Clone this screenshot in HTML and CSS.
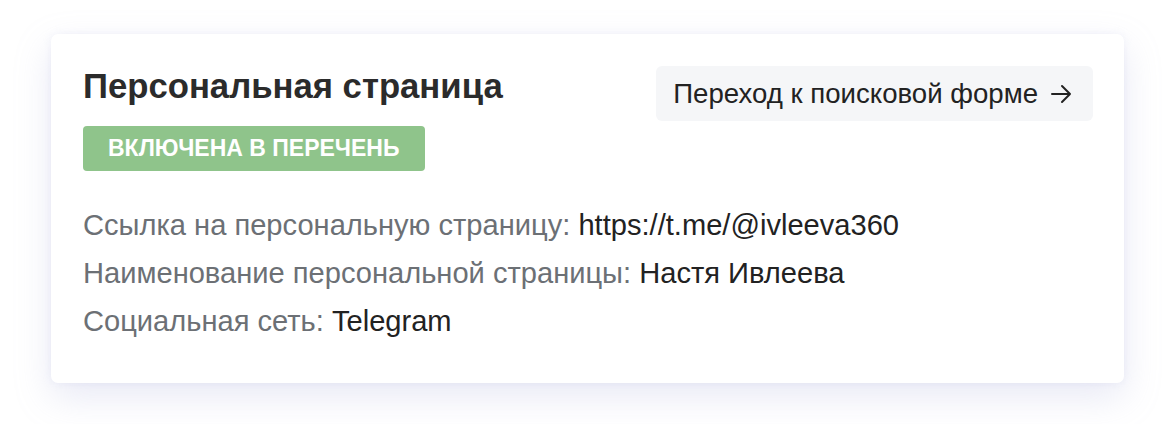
FILE: index.html
```html
<!DOCTYPE html>
<html lang="ru">
<head>
<meta charset="utf-8">
<link rel="stylesheet" href="styles.css">
</head>
<body>
<div class="page">
  <section class="card">
    <div class="head">
      <div class="head-left">
        <h2 class="title">Персональная страница</h2>
        <span class="badge">Включена в перечень</span>
      </div>
      <a class="btn" href="#">Переход к поисковой форме <svg class="arrow" width="22" height="20" viewBox="0 0 22 20" fill="none" stroke="#222" stroke-width="2" stroke-linecap="round" stroke-linejoin="round"><path d="M2 10H20M12 2L20 10L12 18"/></svg></a>
    </div>
    <div class="rows">
      <p class="row"><span class="label">Ссылка на персональную страницу:</span> <span class="value">https://t.me/@ivleeva360</span></p>
      <p class="row"><span class="label">Наименование персональной страницы:</span> <span class="value">Настя Ивлеева</span></p>
      <p class="row"><span class="label">Социальная сеть:</span> <span class="value">Telegram</span></p>
    </div>
  </section>
</div>
</body>
</html>
```

FILE: styles.css
```css
* { box-sizing: border-box; }
html, body { margin: 0; padding: 0; background: #fff; }
body { font-family: "Liberation Sans", Arial, sans-serif; color: #222; }
.page { padding: 34px 52px 41px 51px; }
.card {
  background: #fff;
  border-radius: 7px;
  box-shadow: 0 14px 36px rgba(165, 170, 215, 0.26), 0 0 8px rgba(190, 195, 225, 0.18);
  padding: 32px 31px 38px 32px;
  height: 349px;
}
.head { display: flex; justify-content: space-between; align-items: flex-start; }
.head-left { display: flex; flex-direction: column; align-items: flex-start; }
.title { margin: 0; font-size: 34.7px; font-weight: 700; line-height: 40px; color: #2b2b2b; }
.badge {
  margin-top: 20px;
  background: #8fc48b;
  color: #fff;
  font-weight: 700;
  font-size: 23px;
  text-transform: uppercase;
  border-radius: 4px;
  height: 45px;
  line-height: 45px;
  padding: 0 25px;
}
.btn {
  display: flex;
  align-items: center;
  gap: 12px;
  background: #f5f6f8;
  border-radius: 6px;
  height: 55px;
  padding: 0 21px 0 17px;
  font-size: 27.6px;
  color: #222;
  text-decoration: none;
}
.arrow { display: block; }
.rows { margin-top: 30px; }
.row { margin: 0; font-size: 29.1px; line-height: 48px; }
.label { color: #6c7075; }
.value { color: #222; }
```
